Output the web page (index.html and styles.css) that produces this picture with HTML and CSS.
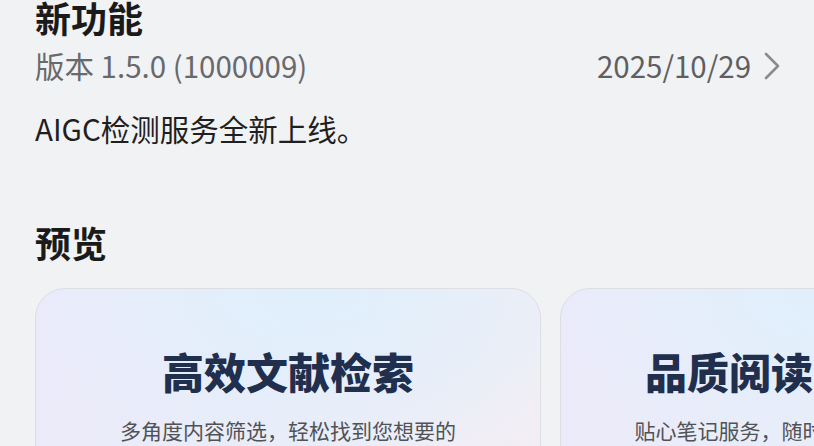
FILE: index.html
```html
<!DOCTYPE html>
<html lang="zh-CN">
<head>
<meta charset="utf-8">
<title>新功能</title>
<link rel="stylesheet" href="styles.css">
</head>
<body>
<main class="page">
  <h1 class="heading heading-first">新功能</h1>
  <div class="version-row">
    <span class="version">版本 1.5.0 (1000009)</span>
    <span class="date">2025/10/29
      <svg class="chevron" width="16" height="28" viewBox="0 0 16 28" aria-hidden="true"><path d="M2 2 L14 14 L2 26" fill="none" stroke="#8a8b8e" stroke-width="2.6" stroke-linecap="round" stroke-linejoin="round"/></svg>
    </span>
  </div>
  <p class="notes">AIGC检测服务全新上线。</p>
  <h2 class="heading heading-preview">预览</h2>
  <div class="cards">
    <div class="card">
      <div class="card-title">高效文献检索</div>
      <div class="card-sub">多角度内容筛选，轻松找到您想要的</div>
    </div>
    <div class="card">
      <div class="card-title">品质阅读沉浸体验</div>
      <div class="card-sub">贴心笔记服务，随时记录阅读所思所想</div>
    </div>
  </div>
</main>
</body>
</html>
```
FILE: styles.css
```css
html, body {
  margin: 0;
  padding: 0;
  background: #f1f2f4;
  overflow: hidden;
}
body {
  width: 814px;
  height: 446px;
  font-family: "Noto Sans CJK SC", "Noto Sans", sans-serif;
  color: #1d1d1f;
}
.page {
  padding: 0 34px 0 35px;
}
.heading {
  margin: 0;
  font-size: 36px;
  line-height: 44px;
  font-weight: 700;
  color: #1a1a1a;
}
.heading-first {
  margin-top: -5px;
}
.version-row {
  margin-top: 6px;
  display: flex;
  justify-content: space-between;
  align-items: center;
  font-size: 29.5px;
  line-height: 40px;
  color: #68696c;
}
.date {
  display: flex;
  align-items: center;
  gap: 13px;
  color: #5e5f62;
}
.chevron {
  display: block;
  margin-top: 1px;
}
.notes {
  margin: 23px 0 0;
  font-size: 29.5px;
  line-height: 40px;
  color: #1f1f21;
}
.heading-preview {
  margin-top: 72px;
}
.cards {
  margin-top: 24px;
  display: flex;
  gap: 19px;
  margin-right: -34px;
  overflow: hidden;
}
.card {
  flex: 0 0 506px;
  box-sizing: border-box;
  height: 320px;
  border: 1px solid #dcdee3;
  border-radius: 30px;
  padding-top: 56px;
  text-align: center;
  background:
    radial-gradient(ellipse 60% 55% at 55% 0%, rgba(222, 239, 252, 0.9), rgba(222, 239, 252, 0) 100%),
    radial-gradient(ellipse 40% 60% at 100% 80%, rgba(246, 237, 244, 0.9), rgba(246, 237, 244, 0) 100%),
    linear-gradient(100deg, #eceafa 0%, #e9edf9 45%, #edeef7 80%, #f2eef5 100%);
}
.card-title {
  font-size: 42px;
  line-height: 52px;
  font-weight: 900;
  color: #1f2f4d;
  white-space: nowrap;
}
.card-sub {
  margin-top: 18px;
  font-size: 21px;
  line-height: 30px;
  color: #515256;
  white-space: nowrap;
}
```
